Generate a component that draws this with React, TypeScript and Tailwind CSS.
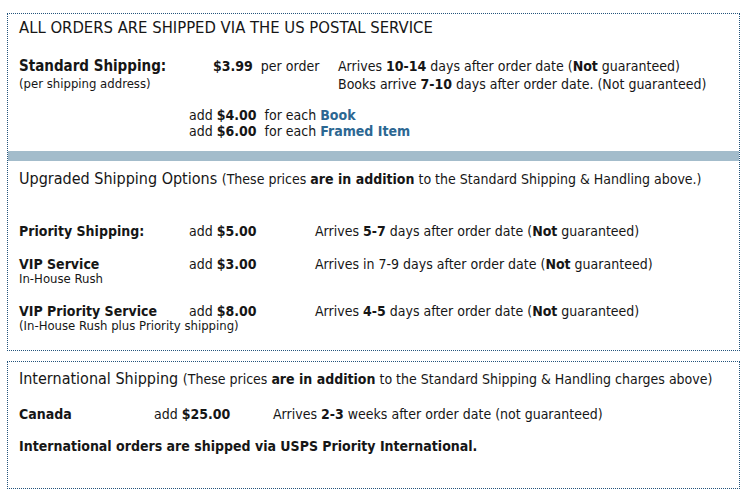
const Row = ({
  label,
  sub,
  price,
  note,
  labelW,
  priceW,
  className = "",
}: {
  label: string;
  sub?: string;
  price: string;
  note: React.ReactNode;
  labelW: string;
  priceW: string;
  className?: string;
}) => (
  <div className={`flex ${className}`}>
    <div className={`${labelW} shrink-0`}>
      <div className="text-[14px] leading-[16px] font-bold">{label}</div>
      {sub && <div className="text-[13px] leading-[14px] whitespace-nowrap">{sub}</div>}
    </div>
    <div className={`${priceW} shrink-0 text-[14px] leading-[16px]`}>
      add <b>{price}</b>
    </div>
    <div className="text-[14px] leading-[16px]">{note}</div>
  </div>
);

export default function App() {
  return (
    <div className="bg-white w-[750px] h-[495px] text-[#161616] [font-family:'DejaVu_Sans_Condensed','DejaVu_Sans',sans-serif] pt-[13px]">
      {/* domestic */}
      <div className="ml-[7px] w-[733px] border border-dotted border-[#24547c]">
        <div className="pl-[11px] pt-[4px] pb-[12px]">
          <h1 className="text-[16.5px] leading-[20px]">
            ALL ORDERS ARE SHIPPED VIA THE US POSTAL SERVICE
          </h1>
          <div className="flex mt-[19px]">
            <div className="w-[194px]">
              <div className="text-[15px] leading-[18px] font-bold">Standard Shipping:</div>
              <div className="text-[13px] leading-[18px]">(per shipping address)</div>
            </div>
            <div className="w-[125px] text-[14px] leading-[18px]">
              <b>$3.99</b>&nbsp; per order
            </div>
            <div className="text-[14px] leading-[18px]">
              <div>
                Arrives <b>10-14</b> days after order date (<b>Not</b> guaranteed)
              </div>
              <div>
                Books arrive <b>7-10</b> days after order date. (Not guaranteed)
              </div>
            </div>
          </div>
          <div className="ml-[170px] mt-[14px] text-[14px] leading-[16px]">
            <div>
              add <b>$4.00</b>&nbsp; for each <b className="text-[#2c6792]">Book</b>
            </div>
            <div>
              add <b>$6.00</b>&nbsp; for each <b className="text-[#2c6792]">Framed Item</b>
            </div>
          </div>
        </div>
        <div className="h-[10px] bg-[#a3bccb]" />
        <div className="pl-[11px] pt-[8px] pb-[17px]">
          <h2 className="text-[16px] leading-[20px]">
            Upgraded Shipping Options{" "}
            <span className="text-[14px]">
              (These prices <b>are in addition</b> to the Standard Shipping &amp; Handling above.)
            </span>
          </h2>
          <Row
            className="mt-[34px]"
            labelW="w-[170px]"
            priceW="w-[126px]"
            label="Priority Shipping:"
            price="$5.00"
            note={
              <>
                Arrives <b>5-7</b> days after order date (<b>Not</b> guaranteed)
              </>
            }
          />
          <Row
            className="mt-[17px]"
            labelW="w-[170px]"
            priceW="w-[126px]"
            label="VIP Service"
            sub="In-House Rush"
            price="$3.00"
            note={
              <>
                Arrives in 7-9 days after order date (<b>Not</b> guaranteed)
              </>
            }
          />
          <Row
            className="mt-[17px]"
            labelW="w-[170px]"
            priceW="w-[126px]"
            label="VIP Priority Service"
            sub="(In-House Rush plus Priority shipping)"
            price="$8.00"
            note={
              <>
                Arrives <b>4-5</b> days after order date (<b>Not</b> guaranteed)
              </>
            }
          />
        </div>
      </div>

      {/* international */}
      <div className="ml-[7px] mt-[10px] w-[733px] border border-dotted border-[#24547c] pl-[11px] pt-[7px] pb-[34px]">
        <h2 className="text-[16px] leading-[20px]">
          International Shipping{" "}
          <span className="text-[14px]">
            (These prices <b>are in addition</b> to the Standard Shipping &amp; Handling charges above)
          </span>
        </h2>
        <div className="flex mt-[17px] text-[14px] leading-[16px]">
          <div className="w-[135px] font-bold">Canada</div>
          <div className="w-[119px]">
            add <b>$25.00</b>
          </div>
          <div>
            Arrives <b>2-3</b> weeks after order date (not guaranteed)
          </div>
        </div>
        <div className="mt-[16px] text-[14px] leading-[16px] font-bold">
          International orders are shipped via USPS Priority International.
        </div>
      </div>
    </div>
  );
}
